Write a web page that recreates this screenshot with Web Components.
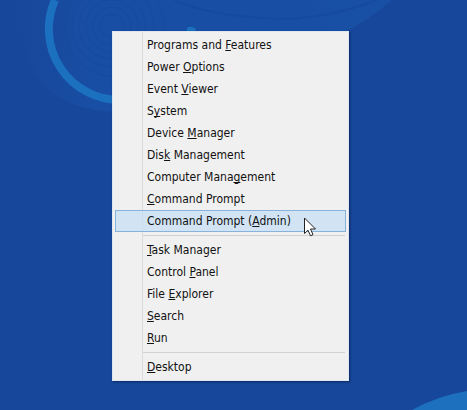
<!DOCTYPE html>
<html lang="en">
<head>
<meta charset="utf-8">
<title>Desktop</title>
<style>
  body {
    margin: 0;
    min-height: 100vh;
    display: flex;
    overflow: hidden;
  }
</style>
</head>
<body>
<desk-top>
  <power-menu>
    <menu-item>Programs and <u>F</u>eatures</menu-item>
    <menu-item>Power <u>O</u>ptions</menu-item>
    <menu-item>Event <u>V</u>iewer</menu-item>
    <menu-item>S<u>y</u>stem</menu-item>
    <menu-item>Device <u>M</u>anager</menu-item>
    <menu-item>Dis<u>k</u> Management</menu-item>
    <menu-item>Computer Mana<u>g</u>ement</menu-item>
    <menu-item><u>C</u>ommand Prompt</menu-item>
    <menu-item active>Command Prompt (<u>A</u>dmin)</menu-item>
    <menu-separator></menu-separator>
    <menu-item><u>T</u>ask Manager</menu-item>
    <menu-item>Control <u>P</u>anel</menu-item>
    <menu-item>File <u>E</u>xplorer</menu-item>
    <menu-item><u>S</u>earch</menu-item>
    <menu-item><u>R</u>un</menu-item>
    <menu-separator></menu-separator>
    <menu-item><u>D</u>esktop</menu-item>
  </power-menu>
  <mouse-pointer></mouse-pointer>
</desk-top>

<script>
class DeskTop extends HTMLElement {
  constructor() {
    super();
    this.attachShadow({ mode: "open" });
    this.shadowRoot.innerHTML = `
      <style>
        :host {
          display: block;
          flex: 1;
          position: relative;
          overflow: hidden;
          background: #17479a;
        }

        .swirl, .hill {
          position: absolute;
        }

        .swirl {
          left: 0;
          top: 0;
        }

        .hill {
          right: 0;
          bottom: 0;
        }

        ::slotted(power-menu) {
          position: absolute;
          left: 112px;
          top: 31px;
        }

        ::slotted(mouse-pointer) {
          position: absolute;
          left: 304px;
          top: 217px;
        }
      </style>
      <svg class="swirl" width="467" height="130" aria-hidden="true">
        <defs>
          <linearGradient id="fade">
            <stop offset="0" stop-color="#184ea4" stop-opacity="0"/>
            <stop offset=".2" stop-color="#184ea4"/>
            <stop offset="1" stop-color="#1850a6"/>
          </linearGradient>
        </defs>
        <path d="M16 0H392Q366 22 340 34L112 112Q50 108 28 62Q18 36 16 0Z" fill="url(#fade)"/>
        <g fill="none" stroke="#16479b" stroke-opacity=".6">
          <circle cx="112" cy="26" r="12"/>
          <circle cx="112" cy="26" r="19"/>
          <circle cx="112" cy="26" r="26"/>
          <circle cx="112" cy="26" r="33"/>
          <circle cx="113" cy="26" r="41"/>
          <circle cx="115" cy="27" r="50"/>
          <path d="M174 0Q215 18 290 19Q340 15 376 0" stroke-width="2"/>
        </g>
        <path d="M55 0A71 71 0 0 0 120 100" fill="none" stroke="#1c70c0" stroke-width="8"/>
        <path d="M187 28Q191 25 196 29L195 31H187Z" fill="#1c70c0"/>
      </svg>
      <svg class="hill" width="60" height="22" aria-hidden="true">
        <path d="M5 22Q30 8 60 3V22Z" fill="#1c70be"/>
      </svg>
      <slot></slot>
    `;
  }
}

class PowerMenu extends HTMLElement {
  constructor() {
    super();
    this.attachShadow({ mode: "open" });
    this.shadowRoot.innerHTML = `
      <style>
        :host {
          display: block;
          box-sizing: border-box;
          min-width: 237px;
          padding: 2px;
          border: 1px solid #dfe6ee;
          background: linear-gradient(#dcdcdc, #dcdcdc) 29px 0 / 1px 100% no-repeat #f0f0f0;
          box-shadow: 1px 1px 2px rgba(0, 10, 50, 0.5);
          font: 12px/20px "DejaVu Sans Condensed", "Open Sans", sans-serif;
          color: #111;
        }

        div {
          display: flex;
          flex-direction: column;
        }
      </style>
      <div role="menu"><slot></slot></div>
    `;
  }
}

class MenuItem extends HTMLElement {
  constructor() {
    super();
    this.attachShadow({ mode: "open" });
    this.shadowRoot.innerHTML = `
      <style>
        :host {
          display: flex;
        }

        button {
          flex: 1;
          margin: 0;
          padding: 0 24px 0 31px;
          border: 1px solid transparent;
          background: none;
          font: inherit;
          color: inherit;
          text-align: left;
          white-space: nowrap;
        }

        :host([active]) button,
        button:hover {
          border-color: #86b2dc;
          background: rgba(200, 224, 246, 0.75);
        }

        ::slotted(u) {
          text-decoration-skip-ink: none;
          text-underline-offset: 1px;
          text-decoration-thickness: 1px;
        }
      </style>
      <button type="button" role="menuitem"><slot></slot></button>
    `;
  }
}

class MenuSeparator extends HTMLElement {
  constructor() {
    super();
    this.attachShadow({ mode: "open" });
    this.shadowRoot.innerHTML = `
      <style>
        :host {
          display: block;
          padding: 3px 1px 3px 28px;
        }

        hr {
          margin: 0;
          border: 0;
          height: 1px;
          background: #d2d2d2;
        }
      </style>
      <hr>
    `;
  }
}

class MousePointer extends HTMLElement {
  constructor() {
    super();
    this.attachShadow({ mode: "open" });
    this.shadowRoot.innerHTML = `
      <style>
        :host {
          display: block;
          pointer-events: none;
        }

        svg {
          display: block;
        }
      </style>
      <svg width="13" height="20" viewBox="0 0 13 20" aria-hidden="true">
        <path d="M.5 1V16.500L4 13.200L6.500 18.800L9 17.700L6.500 12H11.500Z" fill="#fff" stroke="#222"/>
      </svg>
    `;
  }
}

customElements.define("desk-top", DeskTop);
customElements.define("power-menu", PowerMenu);
customElements.define("menu-item", MenuItem);
customElements.define("menu-separator", MenuSeparator);
customElements.define("mouse-pointer", MousePointer);
</script>
</body>
</html>
